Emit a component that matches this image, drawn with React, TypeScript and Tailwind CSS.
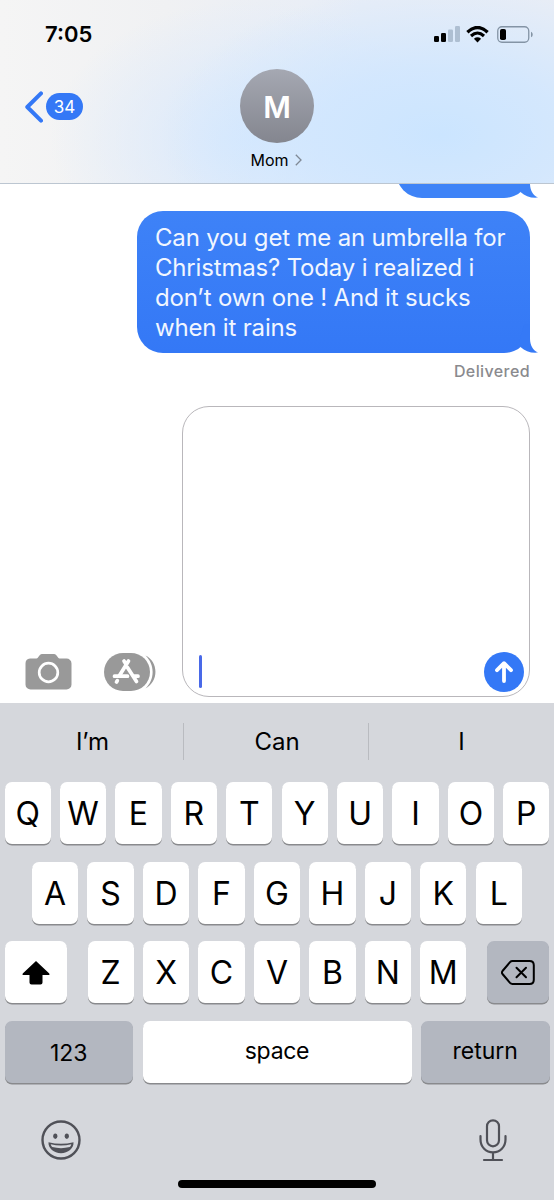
import type { ReactNode } from 'react';

const topRow = ['Q', 'W', 'E', 'R', 'T', 'Y', 'U', 'I', 'O', 'P'];
const homeRow = ['A', 'S', 'D', 'F', 'G', 'H', 'J', 'K', 'L'];
const bottomRow = ['Z', 'X', 'C', 'V', 'B', 'N', 'M'];

const messageLines = [
  'Can you get me an umbrella for',
  'Christmas? Today i realized i',
  'don’t own one ! And it sucks',
  'when it rains',
];

const Key = ({
  children,
  className = 'w-[46.3px] bg-white',
}: {
  children: ReactNode;
  className?: string;
}) => (
  <button
    className={`flex h-[62px] shrink-0 items-center justify-center rounded-[7px] shadow-[0_1.5px_0_#898a8d] ${className}`}
  >
    {children}
  </button>
);

const Letter = ({ children }: { children: string }) => (
  <Key>
    <span className="pt-[2px] text-[32px] leading-none font-normal text-black">{children}</span>
  </Key>
);

const BubbleTail = ({ color }: { color: string }) => (
  <svg
    className="absolute -right-[8px] bottom-0"
    width="28"
    height="34"
    viewBox="0 0 28 34"
    fill={color}
  >
    <path d="M14 5H20V20C20.200 26 22.500 31 28 33.600C21 34.400 15 32 10.800 28.200L9 24Z" />
  </svg>
);

function StatusBar() {
  return (
    <div className="flex h-[68px] items-center justify-between pl-[45px] pr-[21px]">
      <span className="text-[22px] leading-none font-semibold text-black">7:05</span>
      <div className="flex items-center">
        <svg width="26" height="16" viewBox="0 0 26 16">
          <rect x="0" y="10" width="5" height="6" rx="1.300" fill="#000" />
          <rect x="7" y="7" width="5" height="9" rx="1.300" fill="#000" />
          <rect x="14" y="3.500" width="5" height="12.500" rx="1.300" fill="#aebfd2" />
          <rect x="21" y="0" width="5" height="16" rx="1.300" fill="#aebfd2" />
        </svg>
        <svg className="ml-[6px]" width="23" height="17" viewBox="0 0 23 17" fill="none" stroke="#000">
          <path d="M1.400 6.200Q11.500 -3.200 21.600 6.200" strokeWidth="3.300" />
          <path d="M5 10Q11.500 4 18 10" strokeWidth="3.100" />
          <path d="M7.900 12.800Q11.500 9.900 15.100 12.800L11.500 16.400Z" fill="#000" stroke="none" />
        </svg>
        <svg className="ml-[8px]" width="36" height="17" viewBox="0 0 36 17">
          <rect x="0.750" y="0.750" width="31" height="15.500" rx="4.200" fill="none" stroke="#8494a5" strokeWidth="1.300" />
          <rect x="3" y="3" width="6" height="11" rx="1.800" fill="#000" />
          <path d="M34 5.700C36.300 6.700 36.300 10.300 34 11.300Z" fill="#8494a5" />
        </svg>
      </div>
    </div>
  );
}

function ChatHeader() {
  return (
    <header className="h-[184px] border-b border-[#bcc6d1] bg-[radial-gradient(ellipse_280px_150px_at_440px_135px,#cbe5ff_0%,#cfe6ffcc_45%,#d5e8fd00_100%),radial-gradient(ellipse_200px_140px_at_250px_140px,#d8e9fd_0%,#dceafc99_50%,#e8eff800_100%),linear-gradient(90deg,#f5f5f5_0%,#f0f1f3_30%,#e7edf7_65%,#e8edf6_100%)]">
      <StatusBar />
      <div className="grid grid-cols-[1fr_74px_1fr] items-start pt-[1px]">
        <button className="flex h-[75px] items-center gap-[3px] pl-[25px]">
          <svg width="18" height="32" viewBox="0 0 18 32" fill="none" stroke="#3478f6" strokeWidth="4" strokeLinecap="round" strokeLinejoin="round">
            <path d="M16 2.300L2.300 16L16 29.700" />
          </svg>
          <span className="flex h-[27px] w-[37px] items-center justify-center rounded-full bg-[#3478f6] pt-px text-[17px] leading-none text-white">
            34
          </span>
        </button>
        <div className="flex flex-col items-center">
          <div className="flex size-[74px] items-center justify-center rounded-full bg-gradient-to-b from-[#a5a8b2] to-[#84868f]">
            <span className="pt-[2px] text-[30px] leading-none font-semibold text-white">M</span>
          </div>
          <div className="mt-[8px] flex items-center gap-[6px] pr-[2px]">
            <span className="text-[16px] leading-[18px] text-black">Mom</span>
            <svg width="7" height="12" viewBox="0 0 7 12" fill="none" stroke="#7f8995" strokeWidth="1.300">
              <path d="M0.800 0.800L6 6L0.800 11.200" />
            </svg>
          </div>
        </div>
      </div>
    </header>
  );
}

function Conversation() {
  return (
    <section className="flex flex-col items-end pr-[24px]">
      {/* tail end of the previous message, scrolled under the header */}
      <div className="-mr-[24px] flex h-[14px] w-[554px] items-end justify-end overflow-hidden pr-[24px]">
        <div className="relative h-[52px] w-[134px] shrink-0 rounded-[26px] bg-[#3e83f7]">
          <BubbleTail color="#3e83f7" />
        </div>
      </div>
      <div className="relative mt-[13px] h-[142px] w-[393px] rounded-[26px] bg-gradient-to-b from-[#3e82f7] to-[#3478f6] pt-[12px] pl-[18px]">
        {messageLines.map((line) => (
          <p key={line} className="text-[24px] leading-[30px] tracking-[-0.18px] whitespace-nowrap text-[#f1f6ff]">
            {line}
          </p>
        ))}
        <BubbleTail color="#3579f6" />
      </div>
      <span className="mt-[8px] text-[16px] leading-[20px] font-medium tracking-[0.4px] text-[#8a8a8e]">Delivered</span>
    </section>
  );
}

function Composer() {
  return (
    <section className="mt-[25px] flex h-[291px] items-end pr-[24px] pl-[25px]">
      <svg className="mb-[7px]" width="47" height="37" viewBox="0 0 47 37">
        <path
          d="M5 5.500H11.500C13.500 5.500 14 1 17 1H29C32 1 32.500 5.500 34.500 5.500H41.500A5 5 0 0 1 46.500 10.500V31.500A5 5 0 0 1 41.500 36.500H5.500A5 5 0 0 1 0.500 31.500V10.500A5 5 0 0 1 5 5.500Z"
          fill="#999"
        />
        <circle cx="23.500" cy="19.500" r="9.300" fill="none" stroke="#fff" strokeWidth="2.700" />
      </svg>
      <svg className="ml-[32px] mb-[6px]" width="52" height="38" viewBox="0 0 52 38">
        <rect x="0" y="0" width="46" height="38" rx="19" fill="#999" />
        <path d="M41.500 2.500C54.500 8.500 55 28.500 41.500 35.500C51 26.500 51 11.500 41.500 2.500Z" fill="#999" />
        <g stroke="#fff" strokeWidth="3.700" strokeLinecap="round" fill="none">
          <path d="M20 8L22 11.200M24.500 8L15.500 22.500" />
          <path d="M23.500 14.500L32.500 28.500" />
          <path d="M10.500 23.200H23.500M30.500 23.200H34" />
          <path d="M13.300 27.700L12.500 29" />
        </g>
      </svg>
      <div className="ml-[26px] flex h-[291px] w-[348px] items-end justify-between rounded-[27px] border-[1.500px] border-[#b9b7bb] bg-white pr-[5px] pb-[4px] pl-[16px]">
        <span className="mb-[4px] h-[33px] w-[3px] rounded-full bg-[#4969e8]" />
        <button className="flex size-[40px] items-center justify-center rounded-full bg-[#3478f6]">
          <svg width="20" height="24" viewBox="0 0 20 24" fill="none" stroke="#fff" strokeWidth="3.800" strokeLinecap="round" strokeLinejoin="round">
            <path d="M10 21V3.500M3 10.200L10 3.200L17 10.200" />
          </svg>
        </button>
      </div>
    </section>
  );
}

function Keyboard() {
  return (
    <section className="mt-[6px] h-[497px] bg-[#d5d7dc] text-black">
      <div className="grid h-[79px] grid-cols-[183px_1px_184px_1px_185px] items-center pb-[3px] text-center text-[24px] leading-none">
        <span className="pt-[2px] pl-[2px]">I’m</span>
        <i className="h-[37px] bg-[#b9bbc0]" />
        <span className="pt-[2px] pl-[2px]">Can</span>
        <i className="h-[37px] bg-[#b9bbc0]" />
        <span className="pt-[2px]">I</span>
      </div>
      <div className="flex flex-col gap-[17.700px] px-[4.500px]">
        <div className="flex justify-between">
          {topRow.map((k) => <Letter key={k}>{k}</Letter>)}
        </div>
        <div className="flex justify-between px-[27.500px]">
          {homeRow.map((k) => <Letter key={k}>{k}</Letter>)}
        </div>
        <div className="flex justify-between">
          <Key className="w-[62px] bg-white">
            <svg width="28" height="25" viewBox="0 0 28 25">
              <path
                d="M14 1L27 13.200C28 14.200 27.500 15 26.500 15H20.500V22.500Q20.500 24.500 18.500 24.500H9.500Q7.500 24.500 7.500 22.500V15H1.500C0.500 15 0 14.200 1 13.200Z"
                fill="#000"
              />
            </svg>
          </Key>
          <div className="flex gap-[9.150px]">
            {bottomRow.map((k) => <Letter key={k}>{k}</Letter>)}
          </div>
          <Key className="w-[62px] bg-[#b3b7c0]">
            <svg width="34" height="25" viewBox="0 0 34 25" fill="none" stroke="#000" strokeWidth="2" strokeLinejoin="round" strokeLinecap="round">
              <path d="M11.500 1H28.500Q32.800 1 32.800 5.300V19.700Q32.800 24 28.500 24H11.500Q10 24 9 22.900L1.500 14Q0.300 12.500 1.500 11L9 2.100Q10 1 11.500 1Z" />
              <path d="M15.500 7.800L25 17.300M25 7.800L15.500 17.300" />
            </svg>
          </Key>
        </div>
        <div className="flex justify-between text-[23px] leading-none">
          <Key className="w-[128.500px] bg-[#b3b7c0] pt-[2px]">123</Key>
          <Key className="w-[269px] bg-white pb-[2px]">
            <span className="tracking-[-0.3px]">space</span>
          </Key>
          <Key className="w-[128.500px] bg-[#b3b7c0] pb-[2px]">return</Key>
        </div>
      </div>
      <div className="mt-[35.500px] flex items-center justify-between pr-[47px] pl-[41px]">
        <svg width="40" height="40" viewBox="0 0 40 40">
          <circle cx="20" cy="20" r="18.500" fill="none" stroke="#505158" strokeWidth="2.400" />
          <ellipse cx="14.300" cy="16.200" rx="2.100" ry="2.700" fill="#505158" />
          <ellipse cx="25.800" cy="16.200" rx="2.100" ry="2.700" fill="#505158" />
          <path d="M7.500 22.200Q20 25.500 32.500 22.200C33 28 27 33.200 20 33.200S7 28 7.500 22.200Z" fill="#505158" />
          <path d="M9.700 24.200Q20 27 30.300 24.200Q29.800 26 28.800 27.100Q20 29.200 11.200 27.100Q10.200 26 9.700 24.200Z" fill="#d5d7dc" />
        </svg>
        <svg width="28" height="43" viewBox="0 0 28 43" fill="none" stroke="#505158" strokeWidth="2.200" strokeLinecap="round">
          <rect x="8" y="1.300" width="12" height="26" rx="6" />
          <path d="M1.500 17V20.500C1.500 28 7 33.300 14 33.300S26.500 28 26.500 20.500V17M14 33.300V41M5 41H23" />
        </svg>
      </div>
      <div className="mx-auto mt-[18.500px] h-[8px] w-[198px] rounded-full bg-black" />
    </section>
  );
}

export default function App() {
  return (
    <div className="h-[1200px] w-[554px] overflow-hidden bg-white font-['Inter','Liberation_Sans',sans-serif]">
      <ChatHeader />
      <Conversation />
      <Composer />
      <Keyboard />
    </div>
  );
}
